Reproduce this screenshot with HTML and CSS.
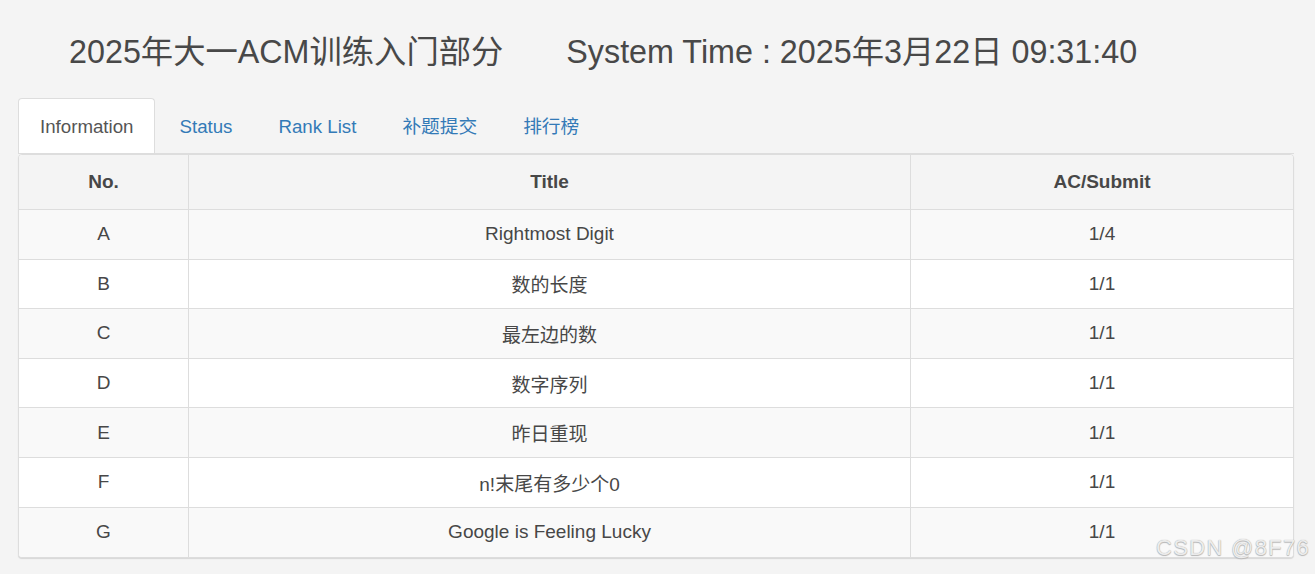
FILE: index.html
```html
<!DOCTYPE html>
<html lang="zh-CN">
<head>
<meta charset="utf-8">
<title>2025年大一ACM训练入门部分</title>
<link rel="stylesheet" href="styles.css">
</head>
<body>
<div class="page">
  <header class="head">
    <span class="contest">2025年大一ACM训练入门部分</span>
    <span class="clock">System Time : 2025年3月22日 09:31:40</span>
  </header>
  <ul class="tabs">
    <li class="tab active"><a>Information</a></li>
    <li class="tab"><a>Status</a></li>
    <li class="tab"><a>Rank List</a></li>
    <li class="tab"><a>补题提交</a></li>
    <li class="tab"><a>排行榜</a></li>
  </ul>
  <div class="panel">
    <table class="problems">
      <colgroup>
        <col class="c-no"><col class="c-title"><col class="c-ac">
      </colgroup>
      <thead>
        <tr><th>No.</th><th>Title</th><th>AC/Submit</th></tr>
      </thead>
      <tbody>
        <tr><td>A</td><td>Rightmost Digit</td><td>1/4</td></tr>
        <tr><td>B</td><td>数的长度</td><td>1/1</td></tr>
        <tr><td>C</td><td>最左边的数</td><td>1/1</td></tr>
        <tr><td>D</td><td>数字序列</td><td>1/1</td></tr>
        <tr><td>E</td><td>昨日重现</td><td>1/1</td></tr>
        <tr><td>F</td><td>n!末尾有多少个0</td><td>1/1</td></tr>
        <tr><td>G</td><td>Google is Feeling Lucky</td><td>1/1</td></tr>
      </tbody>
    </table>
  </div>
  <div class="watermark">CSDN @8F76</div>
</div>
</body>
</html>
```

FILE: styles.css
```css
* { box-sizing: border-box; }
html, body {
  margin: 0;
  padding: 0;
  background: #f4f4f4;
  font-family: "Liberation Sans", Arial, "Noto Sans CJK SC", sans-serif;
  color: #444;
}
.page {
  position: relative;
  width: 1315px;
  height: 574px;
  overflow: hidden;
}
.head {
  display: flex;
  gap: 63px;
  margin: 30px 0 24px 69px;
  font-size: 32.3px;
  line-height: 44px;
  color: #484848;
  white-space: nowrap;
}
.tabs {
  display: flex;
  list-style: none;
  margin: 0 0 0 18px;
  padding: 0;
  width: 1276px;
  border-bottom: 1px solid #ddd;
}
.tab {
  margin-right: 2px;
}
.tab a {
  display: block;
  height: 55px;
  padding: 0 21px;
  line-height: 56px;
  font-size: 18.7px;
  color: #337ab7;
  border: 1px solid transparent;
  border-bottom: none;
  border-radius: 4px 4px 0 0;
  cursor: pointer;
}
.tab.active a {
  color: #555;
  background: #fff;
  border-color: #ddd;
}
.panel {
  margin-left: 18px;
  width: 1276px;
  border: 1px solid #ddd;
  border-radius: 4px;
  overflow: hidden;
  background: #fff;
  box-shadow: 0 1px 1px rgba(0, 0, 0, 0.12);
}
.problems {
  width: 100%;
  border-collapse: separate;
  border-spacing: 0;
  table-layout: fixed;
  font-size: 19px;
  color: #474747;
}
.c-no { width: 169px; }
.c-ac { width: 383px; }
.problems th,
.problems td {
  padding: 0;
  text-align: center;
  vertical-align: middle;
  border-left: 1px solid #ddd;
  border-bottom: 1px solid #ddd;
}
.problems th:first-child,
.problems td:first-child {
  border-left: none;
}
.problems tbody tr:last-child td {
  border-bottom: none;
}
.problems thead tr {
  height: 55px;
  background: #f4f4f4;
}
.problems th {
  font-weight: bold;
}
.problems tbody tr {
  height: 49.6px;
}
.problems tbody tr:nth-child(odd) {
  background: #f9f9f9;
}
.problems tbody tr:nth-child(even) {
  background: #fff;
}
.watermark {
  position: absolute;
  right: 5px;
  top: 535px;
  font-size: 22px;
  letter-spacing: 1.3px;
  color: #ececec;
  text-shadow: 0 0 1px #a0a0a0, 0 1px 1px #b8b8b8;
  white-space: nowrap;
}
```
